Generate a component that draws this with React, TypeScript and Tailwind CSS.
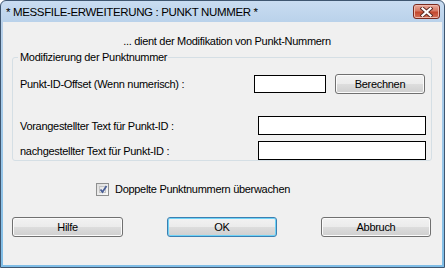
import React from "react";

const F = { fontFamily: '"Liberation Sans", Arial, sans-serif' };

function WinButton({ label, w, def }: { label: string; w: string; def?: boolean }) {
  return (
    <button
      className={
        "h-[20px] rounded-[3px] border text-[11px] leading-[14px] tracking-[-0.3px] text-black bg-[linear-gradient(to_bottom,#f2f2f2_0%,#ebebeb_50%,#dddddd_50%,#cfcfcf_100%)] " +
        w +
        (def
          ? " border-[#3c7fb1] shadow-[inset_0_0_0_1px_#6fd3f7]"
          : " border-[#707070] shadow-[inset_0_0_0_1px_#fbfbfb]")
      }
      style={F}
    >
      {label}
    </button>
  );
}

function CloseButton() {
  return (
    <div className="w-[27px] h-[15px] rounded-[3px] border border-[#7a2b1f] bg-[linear-gradient(to_bottom,#e9a99b_0%,#d67a64_45%,#c4472c_55%,#d4725a_100%)] shadow-[inset_0_0_0_1px_#efb9ab] flex items-center justify-center">
      <svg width="13" height="10" viewBox="0 0 13 10">
        <path d="M2.5 1.5 L10.5 8.5 M10.5 1.5 L2.5 8.5" stroke="#5a2a22" strokeWidth="4" strokeLinecap="square" />
        <path d="M2.5 1.5 L10.5 8.5 M10.5 1.5 L2.5 8.5" stroke="#ffffff" strokeWidth="2.2" strokeLinecap="square" />
      </svg>
    </div>
  );
}

function CheckBox() {
  return (
    <div className="w-[13px] h-[13px] border border-[#8e8f8f] bg-[linear-gradient(135deg,#dcdcdc_0%,#fbfbfb_100%)] p-[2px] flex">
      <div className="flex-1 border border-[#c4c4c4] bg-[linear-gradient(135deg,#e3e3e3_0%,#f7f7f7_100%)] relative">
        <svg className="absolute left-[-2px] top-[-3px]" width="11" height="11" viewBox="0 0 11 11">
          <path d="M2.5 5.5 L4.5 8 L8.5 2" stroke="#4a5f97" strokeWidth="1.8" fill="none" />
        </svg>
      </div>
    </div>
  );
}

export default function App() {
  return (
    <div className="w-[445px] h-[268px] bg-white" style={F}>
      <div className="w-[445px] h-[268px] flex flex-col rounded-t-[6px] border border-[#3f5670] bg-[linear-gradient(to_bottom,#c9dcf1,#b9d1ea_22px,#7fbde6)]">
        {/* Title bar */}
        <div className="h-[21px] flex items-center pl-[5px] pr-[4px] shrink-0">
          <div className="flex-1 text-[11.5px] tracking-[-0.35px] text-black leading-[14px] pt-[1px]" style={F}>
            * MESSFILE-ERWEITERUNG : PUNKT NUMMER *
          </div>
          <CloseButton />
        </div>
        {/* Client */}
        <div className="flex-1 mx-[2px] mb-[2px] bg-[#f0f0f0] flex flex-col text-[11px] tracking-[-0.3px] text-black">
          <div className="pt-[12px] pl-[9px] leading-[14px] text-center">... dient der Modifikation von Punkt-Nummern</div>

          <fieldset className="mt-[2px] ml-[9px] w-[420px] border border-[#d5dfe5] rounded-[3px] pl-[7px]">
            <legend className="ml-[-2px] pl-[2px] pr-[1px] leading-[14px]">Modifizierung der Punktnummer</legend>
            <div className="mt-[10px] h-[20px] flex items-center">
              <span className="flex-1 leading-[14px]">Punkt-ID-Offset (Wenn numerisch) :</span>
              <div className="w-[72px] h-[18px] border border-black bg-white" />
              <div className="ml-[9px] mr-[6px]">
                <WinButton label="Berechnen" w="w-[90px]" />
              </div>
            </div>
            <div className="mt-[22px] h-[19px] flex items-center">
              <span className="flex-1 leading-[14px]">Vorangestellter Text für Punkt-ID :</span>
              <div className="w-[168px] h-[19px] border border-black bg-white mr-[5px]" />
            </div>
            <div className="mt-[6px] h-[19px] flex items-center">
              <span className="flex-1 leading-[14px]">nachgestellter Text für Punkt-ID :</span>
              <div className="w-[168px] h-[19px] border border-black bg-white mr-[5px]" />
            </div>
          </fieldset>

          <div className="mt-[21px] ml-[93px] flex items-center h-[14px]">
            <CheckBox />
            <span className="ml-[6px] leading-[14px]">Doppelte Punktnummern überwachen</span>
          </div>

          <div className="mt-[21px] ml-[9px] flex gap-[44px]">
            <WinButton label="Hilfe" w="w-[111px]" />
            <WinButton label="OK" w="w-[110px]" def />
            <WinButton label="Abbruch" w="w-[110px]" />
          </div>
        </div>
      </div>
    </div>
  );
}
